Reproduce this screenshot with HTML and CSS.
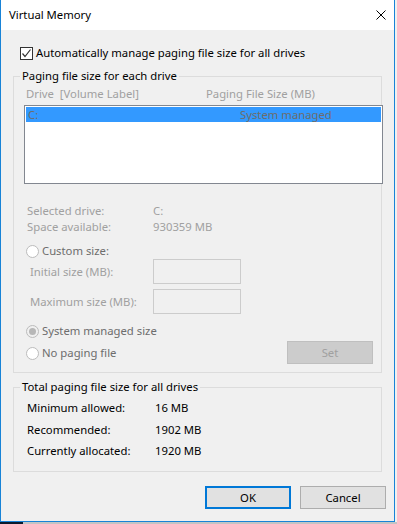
FILE: index.html
```html
<!DOCTYPE html>
<html>
<head>
<meta charset="utf-8">
<link rel="stylesheet" href="styles.css">
</head>
<body>
<div class="win">
  <div class="titlebar">
    <span class="title">Virtual Memory</span>
    <svg class="close" width="10" height="10" viewBox="0 0 10 10"><path d="M0.5 0.5 L9.5 9.5 M9.5 0.5 L0.5 9.5" stroke="#000" stroke-width="1"/></svg>
  </div>
  <div class="body">
    <div class="auto">
      <span class="cb"><svg width="11" height="11" viewBox="0 0 11 11"><path d="M1.5 5.5 L4 8.5 L9.5 1.5" fill="none" stroke="#333" stroke-width="1.2"/></svg></span>
      <span>Automatically manage paging file size for all drives</span>
    </div>
    <div class="group g1">
      <div class="legend">Paging file size for each drive</div>
      <div class="cols dis"><span class="col1">Drive&nbsp; [Volume Label]</span><span>Paging File Size (MB)</span></div>
      <div class="list">
        <div class="row sel"><span class="rc1">C:</span><span>System managed</span></div>
      </div>
      <div class="info dis">
        <div class="irow"><span class="ilab">Selected drive:</span><span>C:</span></div>
        <div class="irow"><span class="ilab">Space available:</span><span>930359 MB</span></div>
      </div>
      <div class="radio-row custom mid"><span class="radio"></span><span>Custom size:</span></div>
      <div class="size-row dis"><span class="slab">Initial size (MB):</span><span class="tbox"></span></div>
      <div class="size-row second dis"><span class="slab">Maximum size (MB):</span><span class="tbox"></span></div>
      <div class="bottom">
        <div class="radios mid">
          <div class="radio-row"><span class="radio on"><span class="dot"></span></span><span>System managed size</span></div>
          <div class="radio-row"><span class="radio"></span><span>No paging file</span></div>
        </div>
        <div class="setbtn">Set</div>
      </div>
    </div>
    <div class="group g2">
      <div class="legend">Total paging file size for all drives</div>
      <div class="totals">
        <div class="trow"><span class="tlab">Minimum allowed:</span><span>16 MB</span></div>
        <div class="trow"><span class="tlab">Recommended:</span><span>1902 MB</span></div>
        <div class="trow"><span class="tlab">Currently allocated:</span><span>1920 MB</span></div>
      </div>
    </div>
    <div class="buttons">
      <div class="btn ok">OK</div>
      <div class="btn">Cancel</div>
    </div>
  </div>
</div>
<div class="taskstrip"><span class="navy"></span></div>
</body>
</html>
```
FILE: styles.css
```css
html, body {
  margin: 0;
  padding: 0;
  background: #f0f0f0;
}
body {
  font-family: "Noto Sans", "DejaVu Sans", sans-serif;
  font-size: 11.3px;
  color: #000;
  width: 397px;
  height: 524px;
  overflow: hidden;
}
.win {
  width: 395px;
  height: 522px;
  box-sizing: border-box;
  border-left: 1px solid #1883d7;
  border-right: 1px solid #1883d7;
  border-bottom: 1px solid #1883d7;
  display: flex;
  flex-direction: column;
}
.titlebar {
  height: 30px;
  background: #fff;
  display: flex;
  align-items: center;
  padding-left: 8px;
  padding-right: 8px;
  flex: none;
}
.title {
  flex: 1;
  line-height: 16px;
}
.close {
  display: block;
  margin-right: 0px;
  margin-top: -1px;
}
.body {
  flex: 1;
  background: #f0f0f0;
  padding-top: 15px;
}
.auto {
  height: 16px;
  display: flex;
  align-items: center;
  padding-left: 19px;
  line-height: 16px;
}
.cb {
  width: 13px;
  height: 13px;
  box-sizing: border-box;
  border: 1px solid #333;
  background: #fff;
  margin-right: 3px;
  display: flex;
  align-items: center;
  justify-content: center;
}
.cb svg { display: block; }
.group {
  margin: 0 12px;
  border: 1px solid #dcdcdc;
  box-sizing: border-box;
}
.g1 {
  margin-top: 15px;
  height: 297px;
}
.g2 {
  margin-top: 14px;
  height: 85px;
}
.legend {
  margin-top: -9px;
  margin-left: 6px;
  padding: 0 2px;
  background: #f0f0f0;
  line-height: 16px;
  width: fit-content;
}
.dis { color: #a0a0a0; }
.mid { color: #6d6d6d; }
.cols {
  margin-top: 2px;
  padding-left: 12px;
  line-height: 16px;
  display: flex;
}
.col1 { width: 180px; }
.list {
  margin-top: 3px;
  margin-left: 10px;
  width: 359px;
  height: 79px;
  box-sizing: border-box;
  border: 1px solid #828790;
  background: #fff;
  padding: 1px;
}
.row {
  height: 15px;
  line-height: 15px;
  display: flex;
  color: #6d6d6d;
}
.sel { background: #3399ff; }
.rc1 {
  width: 214px;
  padding-left: 2px;
  box-sizing: border-box;
}
.info {
  margin-top: 19px;
  padding-left: 13px;
}
.irow {
  display: flex;
  line-height: 16px;
}
.ilab { width: 126px; }
.radio-row {
  display: flex;
  align-items: center;
  height: 16px;
  line-height: 16px;
}
.custom {
  margin-top: 8px;
  padding-left: 12px;
}
.radio {
  width: 13px;
  height: 13px;
  box-sizing: border-box;
  border: 1px solid #bcbcbc;
  border-radius: 50%;
  background: #fff;
  margin-right: 3px;
  display: flex;
  align-items: center;
  justify-content: center;
}
.radio.on { background: #f0f0f0; }
.dot {
  width: 7px;
  height: 7px;
  border-radius: 50%;
  background: #b7b7b7;
}
.size-row {
  display: flex;
  align-items: center;
  height: 25px;
  padding-left: 16px;
}
.size-row.second { margin-top: 5px; }
.slab { width: 123px; }
.tbox {
  width: 88px;
  height: 25px;
  box-sizing: border-box;
  border: 1px solid #cccccc;
  background: #f0f0f0;
}
.bottom {
  margin-top: 9px;
  display: flex;
  align-items: flex-start;
}
.radios {
  padding-left: 12px;
  display: flex;
  flex-direction: column;
  gap: 6px;
}
.setbtn {
  margin-left: auto;
  margin-right: 8px;
  margin-top: 18px;
  width: 86px;
  height: 23px;
  box-sizing: border-box;
  border: 1px solid #bfbfbf;
  background: #cccccc;
  color: #a0a0a0;
  display: flex;
  align-items: center;
  justify-content: center;
}
.totals {
  margin-top: 2.25px;
  padding-left: 13px;
}
.trow {
  display: flex;
  line-height: 21.5px;
}
.tlab { width: 128px; }
.buttons {
  margin-top: 14px;
  display: flex;
  justify-content: flex-end;
  gap: 9px;
  padding-right: 8px;
}
.btn {
  width: 86px;
  height: 23px;
  box-sizing: border-box;
  border: 1px solid #adadad;
  background: #e1e1e1;
  display: flex;
  align-items: center;
  justify-content: center;
}
.btn.ok { border: 2px solid #0078d7; }
.taskstrip {
  height: 2px;
  background: #c4c4c4;
  display: flex;
}
.navy {
  width: 23px;
  background: #0b1a2c;
}
```
